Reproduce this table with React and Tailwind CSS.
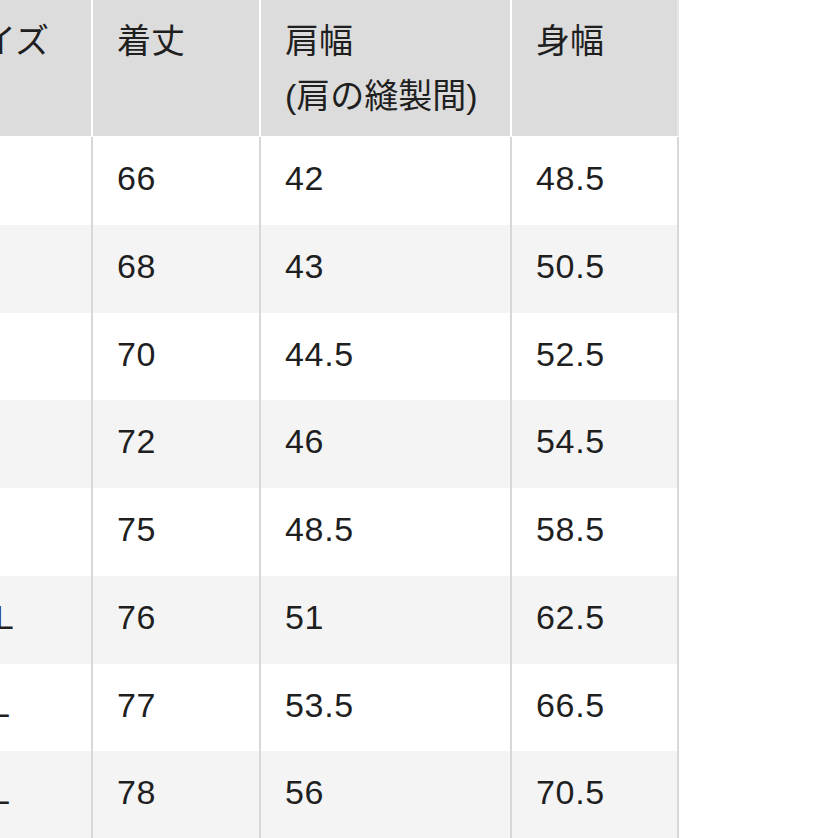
import React from 'react'

const HEAD = [
  { label: ['サイズ'], w: 'w-[169px]' },
  { label: ['着丈'], w: 'w-[168px]' },
  { label: ['肩幅', '(肩の縫製間)'], w: 'w-[251px]' },
  { label: ['身幅'], w: 'w-[167px]' },
]

const ROWS = [
  ['XS', '66', '42', '48.5'],
  ['S', '68', '43', '50.5'],
  ['M', '70', '44.5', '52.5'],
  ['L', '72', '46', '54.5'],
  ['XL', '75', '48.5', '58.5'],
  ['XXL', '76', '51', '62.5'],
  ['3XL', '77', '53.5', '66.5'],
  ['4XL', '78', '56', '70.5'],
]

const font = { fontFamily: '"Liberation Sans", "Noto Sans CJK JP", sans-serif' }

export default function App() {
  return (
    <div className="w-[838px] h-[838px] overflow-hidden bg-white text-[#1f1f1f]" style={font}>
      <div className="ml-[-76px] w-[755px] text-[34px] leading-[55px]">
        {/* header */}
        <div className="flex h-[137px] border-b border-white">
          {HEAD.map((h, i) => (
            <div
              key={i}
              className={`${h.w} bg-[#dcdcdc] pl-[24px] pt-[14px] ${i < 3 ? 'border-r-2 border-white' : 'border-r-2 border-[#e6e6e6]'}`}
            >
              {h.label.map((l) => (
                <div key={l} className="whitespace-nowrap">{l}</div>
              ))}
            </div>
          ))}
        </div>

        {/* body */}
        {ROWS.map((r, ri) => (
          <div key={ri} className={`flex h-[87.75px] ${ri % 2 ? 'bg-[#f4f4f4]' : 'bg-white'}`}>
            {r.map((c, ci) => (
              <div
                key={ci}
                className={`${HEAD[ci].w} pl-[24px] pt-[14px] border-r-2 border-[#d8d8d8] tracking-[0.02em] whitespace-nowrap`}
              >
                {c}
              </div>
            ))}
          </div>
        ))}
      </div>
    </div>
  )
}
